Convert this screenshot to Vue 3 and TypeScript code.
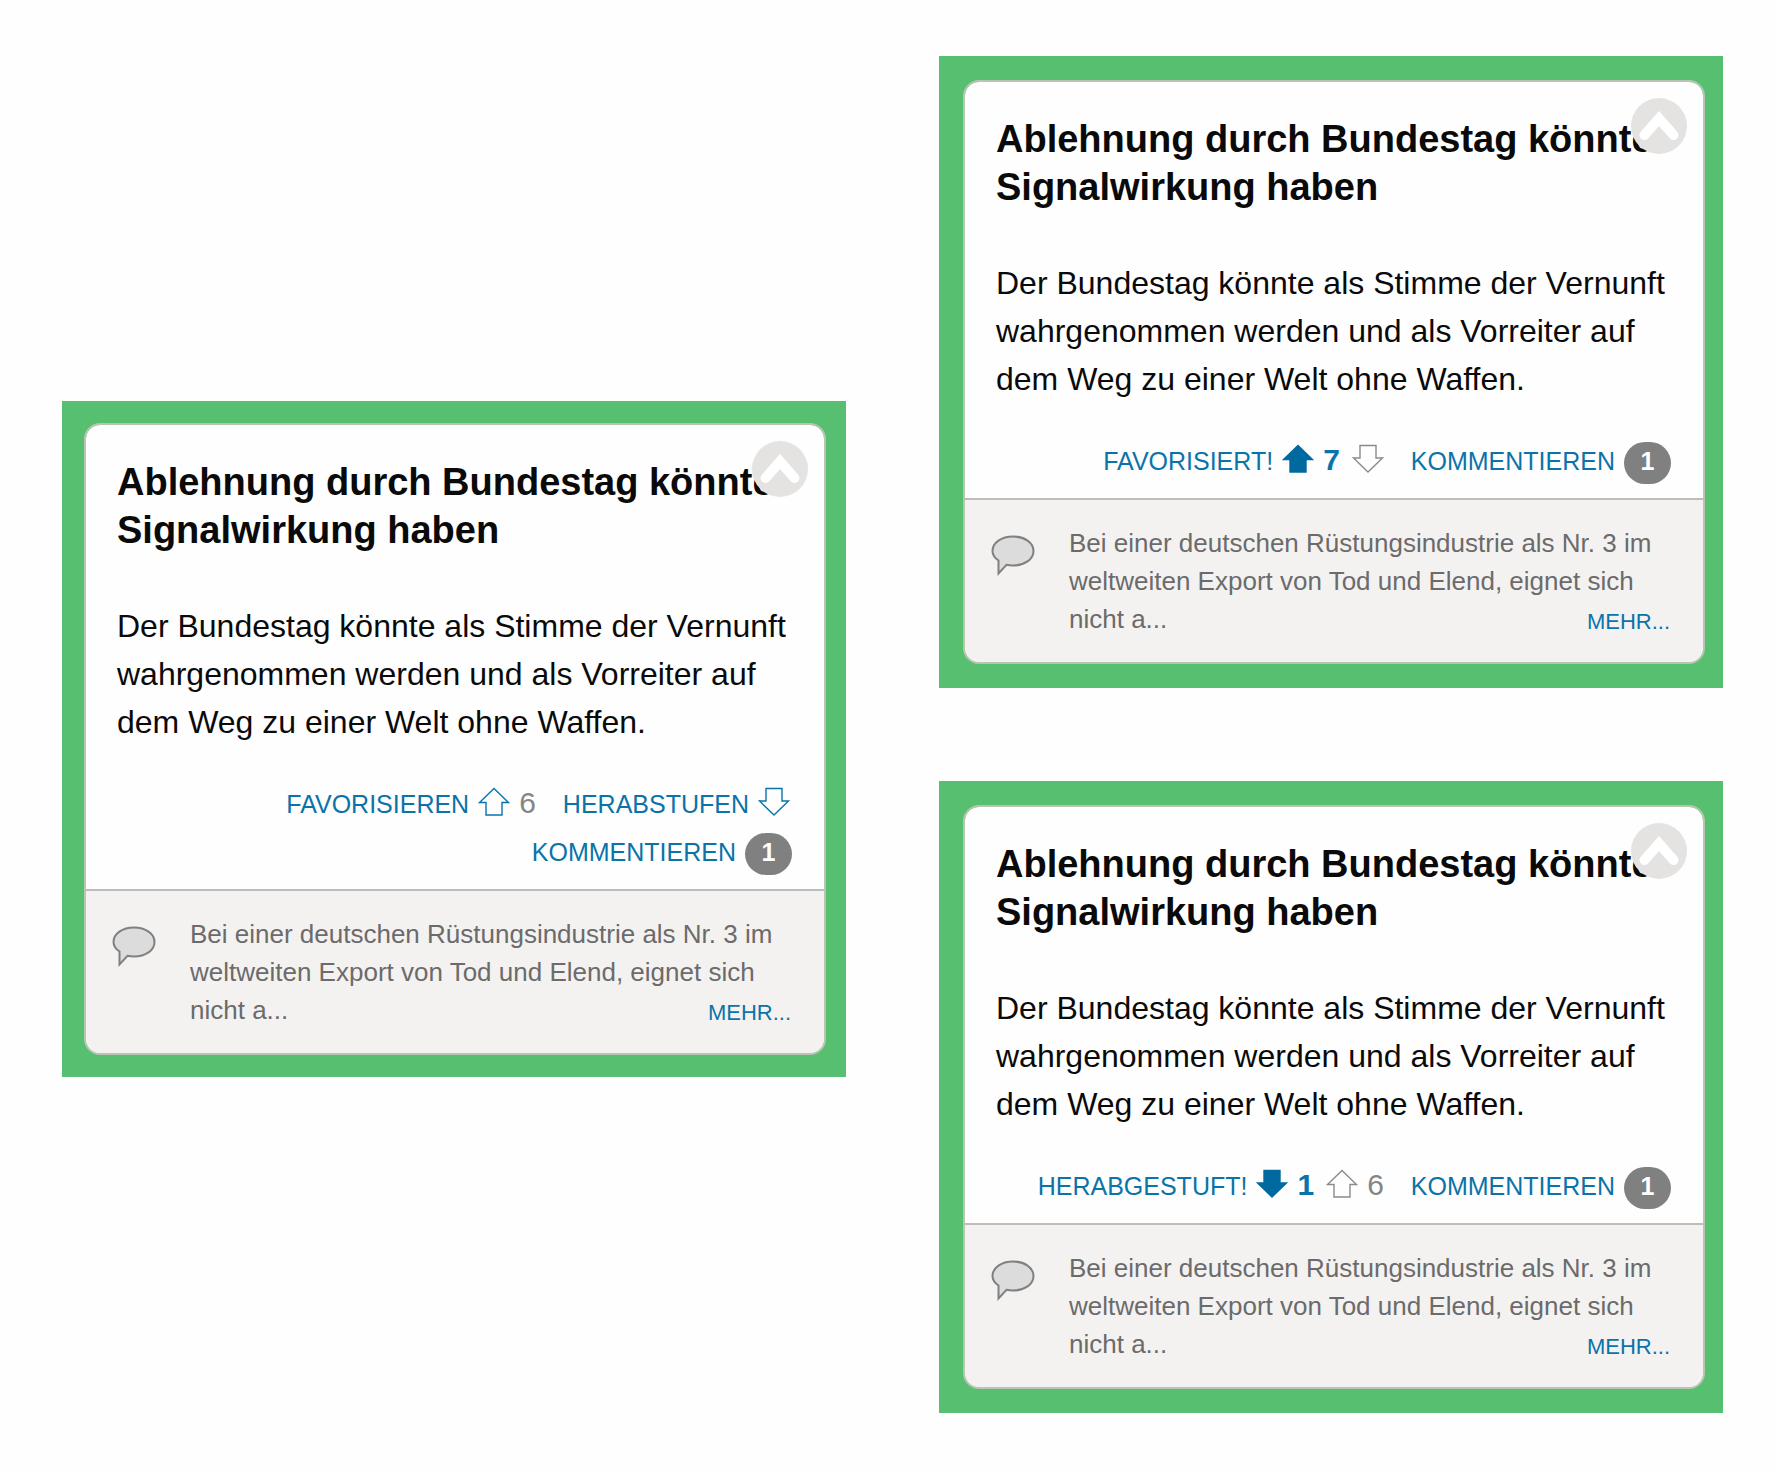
<script setup lang="ts">
type ArrowDirection = 'up' | 'down'

interface VoteAction {
  name: string
  label?: string
  direction: ArrowDirection
  count?: number
  state: 'open' | 'chosen' | 'muted'
}

interface ArgumentCard {
  id: string
  votes: VoteAction[]
}

const title = 'Ablehnung durch Bundestag könnte Signalwirkung haben'
const body =
  'Der Bundestag könnte als Stimme der Vernunft wahrgenommen werden und als Vorreiter auf dem Weg zu einer Welt ohne Waffen.'
const comment =
  'Bei einer deutschen Rüstungsindustrie als Nr. 3 im weltweiten Export von Tod und Elend, eignet sich nicht a...'

const arrowPaths: Record<ArrowDirection, string> = {
  up: 'M16 1.5 L30.5 15.5 H24 V28 H8 V15.5 H1.5 Z',
  down: 'M16 28 L30.5 14 H24 V1.5 H8 V14 H1.5 Z',
}

const columns: { name: string; cards: ArgumentCard[] }[] = [
  {
    name: 'before',
    cards: [
      {
        id: 'neutral',
        votes: [
          { name: 'Favorisieren', label: 'FAVORISIEREN', direction: 'up', count: 6, state: 'open' },
          { name: 'Herabstufen', label: 'HERABSTUFEN', direction: 'down', state: 'open' },
        ],
      },
    ],
  },
  {
    name: 'after',
    cards: [
      {
        id: 'upvoted',
        votes: [
          { name: 'Favorisiert', label: 'FAVORISIERT!', direction: 'up', count: 7, state: 'chosen' },
          { name: 'Herabstufen', direction: 'down', state: 'muted' },
        ],
      },
      {
        id: 'downvoted',
        votes: [
          { name: 'Herabgestuft', label: 'HERABGESTUFT!', direction: 'down', count: 1, state: 'chosen' },
          { name: 'Favorisieren', direction: 'up', count: 6, state: 'muted' },
        ],
      },
    ],
  },
]
</script>

<template>
  <main class="board">
    <div v-for="column in columns" :key="column.name" class="column" :class="column.name">
      <section v-for="card in column.cards" :key="card.id" class="frame">
        <article class="card">
          <button class="collapse" type="button" aria-label="Einklappen">
            <svg viewBox="0 0 56 56" aria-hidden="true">
              <circle cx="28" cy="28" r="28" fill="#e4e3e1" />
              <path
                d="M13.5 37 L28 20.5 L42.5 37"
                fill="none"
                stroke="#fff"
                stroke-width="10"
                stroke-linecap="round"
              />
            </svg>
          </button>

          <div class="content">
            <h2 class="title">{{ title }}</h2>
            <p class="body">{{ body }}</p>
            <div class="actions">
              <div class="votes">
                <button
                  v-for="vote in card.votes"
                  :key="vote.name"
                  class="action vote"
                  :class="vote.state"
                  type="button"
                  :aria-label="vote.name"
                >
                  <span v-if="vote.label">{{ vote.label }}</span>
                  <svg class="arrow" viewBox="0 0 32 26" aria-hidden="true">
                    <path :d="arrowPaths[vote.direction]" />
                  </svg>
                  <span v-if="vote.count" class="count">{{ vote.count }}</span>
                </button>
              </div>
              <button class="action comment-action" type="button">
                <span>KOMMENTIEREN</span>
                <span class="badge">1</span>
              </button>
            </div>
          </div>

          <footer class="comment">
            <svg class="bubble" viewBox="0 0 44 42" aria-hidden="true">
              <path
                d="M22 1.5 C33.5 1.5 42.5 7.5 42.5 16 C42.5 24.5 33.5 30.5 22 30.5 C19.5 30.5 17.5 30.3 15.5 29.8 L7.5 38.5 L7.5 25.5 C3.8 23 1.5 19.8 1.5 16 C1.5 7.5 10.5 1.5 22 1.5 Z"
                fill="#dcdcdc"
                stroke="#808080"
                stroke-width="2"
              />
            </svg>
            <p class="comment-text">{{ comment }} <a class="more" href="#">MEHR...</a></p>
          </footer>
        </article>
      </section>
    </div>
  </main>
</template>

<style>
body {
  margin: 0;
  background: #fefefe;
}
</style>

<style scoped>
.board {
  display: grid;
  grid-template-columns: 1fr 1fr;
  gap: 93px;
  align-items: center;
  padding: 56px 54px 61px 62px;
  font-family: 'Liberation Sans', Arial, sans-serif;
  color: #0a0a0a;
}

.column {
  display: flex;
  flex-direction: column;
  gap: 93px;
}

.before {
  padding-top: 9px;
}

.frame {
  padding: 24px 18px 24px 24px;
  background: #57c070;
}

.before .frame {
  padding: 22px 20px 22px 22px;
}

.card {
  position: relative;
  overflow: hidden;
  border: 2px solid #b9c4b1;
  border-radius: 16px;
  background: #fefefe;
  background-clip: padding-box;
}

.collapse {
  position: absolute;
  top: 16px;
  right: 16px;
  width: 56px;
  height: 56px;
  padding: 0;
  border: 0;
  background: none;
}

.collapse svg {
  display: block;
}

.content {
  padding: 33px 32px 13px 31px;
}

.title {
  margin: 0 0 48px;
  font-size: 38px;
  line-height: 48px;
}

.body {
  margin: 0 0 34px;
  font-size: 32px;
  line-height: 48px;
}

.actions,
.votes {
  display: flex;
  flex-wrap: wrap;
  align-items: baseline;
  justify-content: flex-end;
  column-gap: 27px;
}

.votes {
  column-gap: 12px;
}

.before .votes {
  column-gap: 27px;
  padding-right: 2px;
}

.action {
  display: flex;
  align-items: baseline;
  gap: 9px;
  padding: 0;
  border: 0;
  background: none;
  color: #0a73a9;
  font-family: inherit;
  font-size: 25px;
  line-height: 48px;
}

/* The box ends at the text baseline; the arrow itself reaches just below it. */
.arrow {
  overflow: visible;
  width: 32px;
  height: 26px;
  fill: none;
  stroke: #0a73a9;
  stroke-width: 1.4;
}

.chosen .arrow {
  fill: #00699f;
  stroke: #00699f;
}

.muted .arrow {
  stroke: #8a8a8a;
}

.count {
  color: #858585;
  font-size: 30px;
  line-height: 40px;
}

.chosen .count {
  color: #0a73a9;
  font-weight: bold;
}

.badge {
  box-sizing: border-box;
  width: 47px;
  height: 42px;
  border-radius: 21px;
  background: #808080;
  color: #fff;
  font-weight: bold;
  line-height: 38px;
  text-align: center;
}

.comment {
  display: flex;
  align-items: flex-start;
  gap: 34px;
  padding: 24px 33px 18px 26px;
  border-top: 2px solid #bfbbb9;
  background: #f4f2f1;
}

.bubble {
  flex: none;
  width: 44px;
  height: 42px;
  margin-top: 11px;
}

.comment-text {
  flex: 1;
  margin: 0;
  color: #6b6b6b;
  font-size: 26px;
  line-height: 38px;
}

.more {
  float: right;
  color: #0a73a9;
  font-size: 22px;
  line-height: 44px;
  text-decoration: none;
}
</style>
